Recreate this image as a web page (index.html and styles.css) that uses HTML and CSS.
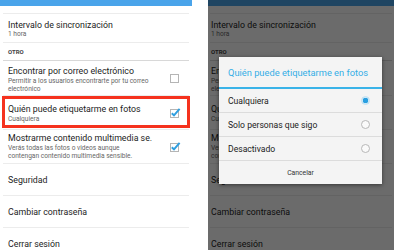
FILE: index.html
```html
<!DOCTYPE html>
<html lang="es">
<head>
<meta charset="utf-8">
<link rel="stylesheet" href="styles.css">
</head>
<body>
<div class="pair">
  <section class="screen screen--left">
    <div class="appbar"></div>
    <div class="spacer"></div>
    <div class="row row--sync">
      <div class="text"><div class="title">Intervalo de sincronización</div><div class="sub">1 hora</div></div>
    </div>
    <div class="header">OTRO</div>
    <div class="row row--find">
      <div class="text"><div class="title">Encontrar por correo electrónico</div><div class="sub">Permitir a los usuarios encontrarte por tu correo electrónico</div></div>
      <span class="check"><svg width="12" height="12" viewBox="0 0 12 12"><rect x="1.5" y="2.5" width="8" height="8" fill="none" stroke="#b5b5b5"/></svg></span>
    </div>
    <div class="row row--tag">
      <div class="text"><div class="title">Quién puede etiquetarme en fotos</div><div class="sub">Cualquiera</div></div>
      <span class="check"><svg width="12" height="12" viewBox="0 0 12 12"><rect x="1.5" y="2.5" width="8" height="8" fill="none" stroke="#b5b5b5"/><path d="M2.8 6.2 L5 8.4 L10.6 1.8" fill="none" stroke="#2f9fe0" stroke-width="2"/></svg></span>
      <span class="highlight"></span>
    </div>
    <div class="row row--media">
      <div class="text"><div class="title">Mostrarme contenido multimedia se.</div><div class="sub">Verás todas las fotos o videos aunque<br>contengan contenido multimedia sensible.</div></div>
      <span class="check"><svg width="12" height="12" viewBox="0 0 12 12"><rect x="1.5" y="2.5" width="8" height="8" fill="none" stroke="#b5b5b5"/><path d="M2.8 6.2 L5 8.4 L10.6 1.8" fill="none" stroke="#2f9fe0" stroke-width="2"/></svg></span>
    </div>
    <div class="row row--simple"><div class="title">Seguridad</div></div>
    <div class="row row--simple"><div class="title">Cambiar contraseña</div></div>
    <div class="row row--simple"><div class="title">Cerrar sesión</div></div>
  </section>

  <section class="screen screen--right">
    <div class="appbar"></div>
    <div class="spacer"></div>
    <div class="row row--sync">
      <div class="text"><div class="title">Intervalo de sincronización</div><div class="sub">1 hora</div></div>
    </div>
    <div class="header">OTRO</div>
    <div class="row row--find">
      <div class="text"><div class="title">Encontrar por correo electrónico</div><div class="sub">Permitir a los usuarios encontrarte por tu correo electrónico</div></div>
    </div>
    <div class="row row--tag">
      <div class="text"><div class="title">Quién puede etiquetarme en fotos</div><div class="sub">Cualquiera</div></div>
    </div>
    <div class="row row--media">
      <div class="text"><div class="title">Mostrarme contenido multimedia se.</div><div class="sub">Verás todas las fotos o videos aunque<br>contengan contenido multimedia sensible.</div></div>
    </div>
    <div class="row row--simple"><div class="title">Seguridad</div></div>
    <div class="row row--simple"><div class="title">Cambiar contraseña</div></div>
    <div class="row row--simple"><div class="title">Cerrar sesión</div></div>

    <div class="scrim"></div>
    <div class="dialog">
      <div class="dialog-title">Quién puede etiquetarme en fotos</div>
      <div class="option"><span>Cualquiera</span><span class="radio radio--on"></span></div>
      <div class="option"><span>Solo personas que sigo</span><span class="radio"></span></div>
      <div class="option"><span>Desactivado</span><span class="radio"></span></div>
      <div class="dialog-cancel">Cancelar</div>
    </div>
  </section>
</div>
</body>
</html>
```

FILE: styles.css
```css
* { box-sizing: border-box; margin: 0; padding: 0; }
html, body { width: 400px; height: 250px; overflow: hidden; background: #fff; }
body { font-family: Roboto, "Noto Sans", sans-serif; color: #222; }

.pair { display: flex; align-items: flex-start; height: 250px; }

.screen { position: relative; height: 250px; overflow: hidden; background: #fff; }
.screen--left { width: 192px; }
.screen--right { width: 186px; margin-left: 16px; }

.appbar { height: 6px; background: #4aa4ea; }
.spacer { height: 8px; border-bottom: 1px solid #ececec; margin: 0 3px; }

.row { position: relative; display: flex; align-items: center; border-bottom: 1px solid #ececec; margin: 0 3px; padding-left: 5px; padding-right: 8px; }
.screen--right .row, .screen--right .header { padding-left: 1px; margin: 0 2px; }
.screen--right .spacer { margin: 0 2px; }

.text { flex: 1; }
.title { font-size: 8.8px; line-height: 11px; color: #1c1c1c; white-space: nowrap; }
.sub { font-size: 6.6px; line-height: 8px; color: #666; }

.row--sync { height: 29px; align-items: flex-start; padding-top: 6px; }
.row--sync .sub { line-height: 7px; }

.header { height: 18px; padding: 5px 0 0 5px; margin: 0 3px; font-size: 6px; line-height: 8px; font-weight: bold; color: #444; border-bottom: 1px solid #d8d8d8; }

.row--find { height: 35px; }
.row--find .text { align-self: flex-start; padding-top: 5px; padding-right: 10px; }
.row--tag { height: 34px; }
.row--tag .text { padding-top: 1px; }
.row--media { height: 34px; }
.row--media .text { align-self: flex-start; padding-top: 3px; padding-right: 10px; }
.row--simple { height: 32px; padding-top: 2px; }

.check { display: block; width: 12px; height: 12px; flex: none; }
.check svg { display: block; }

.highlight { position: absolute; left: -1px; right: -1px; top: 0; bottom: 1px; border: 3px solid #f5321e; pointer-events: none; }

.scrim { position: absolute; inset: 0; background: rgba(0, 0, 0, 0.58); }

.dialog { position: absolute; left: 11px; top: 57px; width: 163px; height: 127px; background: #f4f4f4; box-shadow: 0 1px 4px rgba(0,0,0,0.5); display: flex; flex-direction: column; }
.dialog-title { height: 32px; padding-left: 9px; display: flex; align-items: center; font-size: 9.3px; color: #35aee6; border-bottom: 2px solid #3ab3e8; }
.option { height: 24px; display: flex; align-items: center; justify-content: space-between; padding: 0 12px 0 9px; font-size: 8.6px; color: #222; border-bottom: 1px solid #dcdcdc; }
.radio { width: 9px; height: 9px; border-radius: 50%; border: 1px solid #b8b8b8; background: #fafafa; }
.radio--on { border: 1px solid #bfe1f3; background: radial-gradient(circle, #2a9fe0 0 2.6px, #cfe9f6 3px); }
.dialog-cancel { flex: 1; display: flex; align-items: center; justify-content: center; font-size: 6.8px; color: #333; }
```
